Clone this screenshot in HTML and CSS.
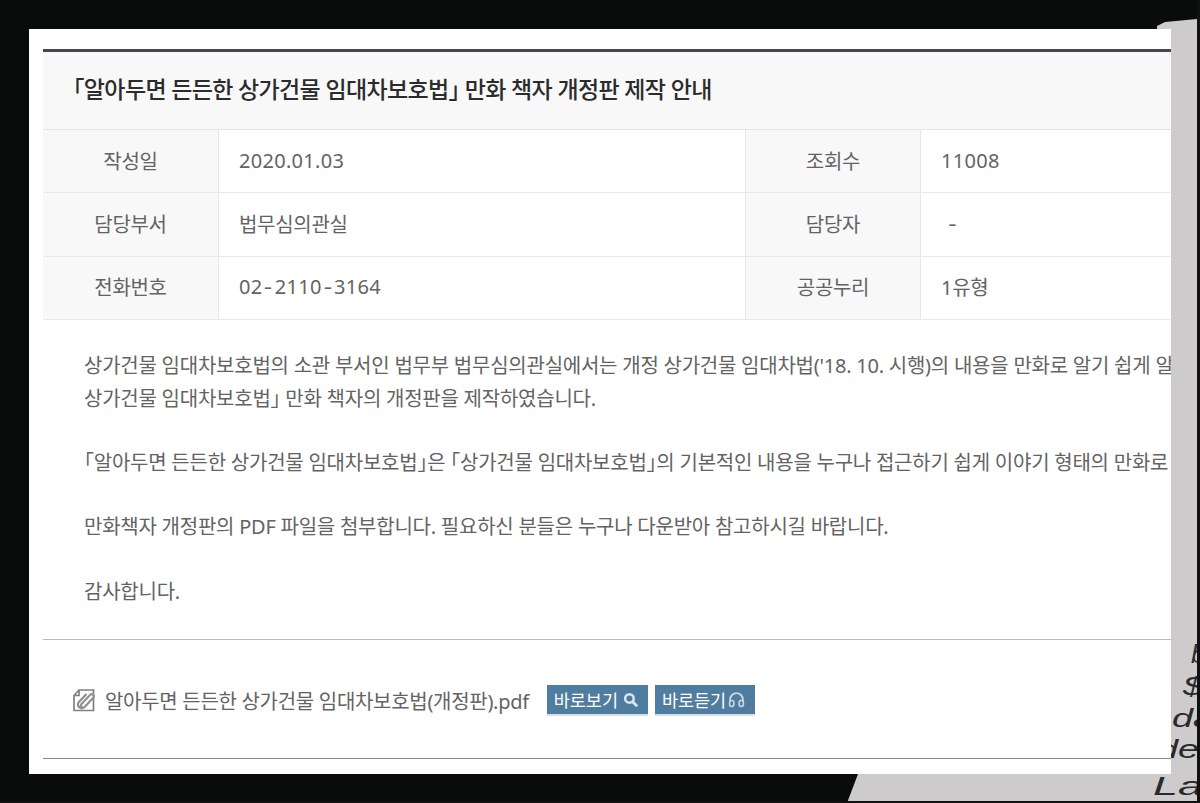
FILE: index.html
```html
<!DOCTYPE html>
<html lang="ko">
<head>
<meta charset="utf-8">
<title>상가건물 임대차보호법 만화 책자 개정판 제작 안내</title>
<link rel="stylesheet" href="styles.css">
</head>
<body>
<svg class="paper" width="1200" height="803" viewBox="0 0 1200 803" aria-hidden="true">
  <polygon points="1157,26 1165,22 1197,19 1197,803 847,803 858,774 1160,770" fill="#cdcbcc"/>
  <g class="paper-text">
    <text x="1191" y="663">b</text>
    <text x="1183" y="695" textLength="20" lengthAdjust="spacingAndGlyphs">$</text>
    <text x="1172" y="727" textLength="42" lengthAdjust="spacingAndGlyphs">da</text>
    <text x="1157" y="758" textLength="42" lengthAdjust="spacingAndGlyphs">de</text>
    <text x="1153" y="795" textLength="50" lengthAdjust="spacingAndGlyphs">La</text>
  </g>
  <rect class="paper-edge" x="1197" y="0" width="3" height="803"/>
  <rect class="paper-edge" x="0" y="801" width="1200" height="2"/>
</svg>
<main class="card">
  <article class="view">
    <h1 class="title"><span class="br">「</span>알아두면 든든한 상가건물 임대차보호법<span class="br">」</span> 만화 책자 개정판 제작 안내</h1>
    <div class="meta">
      <div class="label">작성일</div><div class="value num">2020.01.03</div>
      <div class="label">조회수</div><div class="value num">11008</div>
      <div class="label">담당부서</div><div class="value">법무심의관실</div>
      <div class="label">담당자</div><div class="value value-dash"><span class="hy">-</span></div>
      <div class="label">전화번호</div><div class="value num">02<span class="hy">-</span>2110<span class="hy">-</span>3164</div>
      <div class="label">공공누리</div><div class="value">1유형</div>
    </div>
    <div class="body">
      <p class="line">상가건물 임대차보호법의 소관 부서인 법무부 법무심의관실에서는 개정 상가건물 임대차법('18. 10. 시행)의 내용을 만화로 알기 쉽게 알</p>
      <p class="line">상가건물 임대차보호법<span class="br">」</span> 만화 책자의 개정판을 제작하였습니다.</p>
      <p class="line">&nbsp;</p>
      <p class="line"><span class="br">「</span>알아두면 든든한 상가건물 임대차보호법<span class="br">」</span>은 <span class="br">「</span>상가건물 임대차보호법<span class="br">」</span>의 기본적인 내용을 누구나 접근하기 쉽게 이야기 형태의 만화로</p>
      <p class="line">&nbsp;</p>
      <p class="line">만화책자 개정판의 PDF 파일을 첨부합니다. 필요하신 분들은 누구나 다운받아 참고하시길 바랍니다.</p>
      <p class="line">&nbsp;</p>
      <p class="line">감사합니다.</p>
    </div>
    <div class="files">
      <svg class="clip" width="24" height="24" viewBox="0 0 24 24" aria-hidden="true">
        <path d="M7 2 H21.500 V22.500 H2 V7.500 Z M7 2 V7.500 H2" fill="none" stroke="#808080" stroke-width="1.700"/>
        <path d="M18.500 6.500 L9.500 16 a2.200 2.200 0 0 0 3.200 3 L20 11 M18.500 6.500 a2.300 2.300 0 0 1 3.200 3 L12 19.500 a3.800 3.800 0 0 1 -5.500 -5 L14 6.500" fill="none" stroke="#8f8f8f" stroke-width="2.100" stroke-linecap="round"/>
      </svg>
      <span class="filename">알아두면 든든한 상가건물 임대차보호법(개정판).pdf</span>
      <a class="btn btn-view">바로보기
        <svg width="15" height="15" viewBox="0 0 14 14" aria-hidden="true"><circle cx="6" cy="6" r="4" fill="none" stroke="#dbe6ef" stroke-width="2.300"/><path d="M9 9 L12.500 12.500" stroke="#dbe6ef" stroke-width="2.600" stroke-linecap="round"/></svg>
      </a>
      <a class="btn btn-listen">바로듣기
        <svg width="17" height="17" viewBox="0 0 16 16" aria-hidden="true"><path d="M2 10 V8 a6 6 0 0 1 12 0 V10" fill="none" stroke="#c6d6e3" stroke-width="1.700"/><rect x="1.500" y="9" width="4" height="5.500" rx="1.800" fill="none" stroke="#c6d6e3" stroke-width="1.500"/><rect x="10.500" y="9" width="4" height="5.500" rx="1.800" fill="none" stroke="#c6d6e3" stroke-width="1.500"/></svg>
      </a>
    </div>
  </article>
</main>
</body>
</html>
```
FILE: styles.css
```css
html, body {
  margin: 0;
  padding: 0;
  width: 1200px;
  height: 803px;
  overflow: hidden;
  background: #0a0c0c;
}
body {
  font-family: "Noto Sans", "Noto Sans CJK KR", sans-serif;
  color: #636363;
  padding: 29px;
  box-sizing: border-box;
}
.paper {
  position: absolute;
  left: 0;
  top: 0;
}
.paper-text text {
  font-family: "Liberation Sans", sans-serif;
  font-style: italic;
  font-size: 26px;
  fill: #2a2a2a;
}
.paper-edge {
  fill: #111;
}
.card {
  position: relative;
  width: 1142px;
  height: 745px;
  background: #fff;
  padding: 20px 0 0 14px;
  box-sizing: border-box;
  overflow: hidden;
}
.view {
  width: 1128px;
}
.br {
  font-feature-settings: "halt";
}
.title {
  margin: 0;
  height: 81px;
  box-sizing: border-box;
  border-top: 3px solid #45464f;
  border-bottom: 1px solid #e4e4e4;
  background: #f8f8f8;
  padding: 0 0 5px 30px;
  display: flex;
  align-items: center;
  font-size: 23px;
  font-weight: 500;
  color: #2b2b2b;
  letter-spacing: -0.65px;
  white-space: pre;
}
.meta {
  display: grid;
  grid-template-columns: 176px 527px 175px 250px;
  grid-auto-rows: 63.300px;
}
.label, .value {
  display: flex;
  align-items: center;
  box-sizing: border-box;
  border-bottom: 1px solid #e8e8e8;
  padding-bottom: 2px;
  font-size: 20px;
  letter-spacing: -0.3px;
}
.label {
  justify-content: center;
  background: #f8f8f8;
  border-right: 1px solid #e8e8e8;
}
.value {
  padding-left: 20px;
}
.value:nth-child(2), .value:nth-child(6), .value:nth-child(10) {
  border-right: 1px solid #e8e8e8;
}
.num {
  letter-spacing: 0.3px;
}
.hy {
  display: inline-block;
  width: 12.300px;
  text-align: center;
  transform: scaleX(1.300);
}
.value-dash {
  padding-left: 25px;
}
.body {
  padding: 30.500px 0 30.500px 41px;
  border-bottom: 1px solid #bbb;
  overflow: hidden;
}
.line {
  margin: 0;
  font-size: 20px;
  line-height: 32.200px;
  white-space: nowrap;
  letter-spacing: -0.24px;
}
.files {
  display: flex;
  align-items: center;
  height: 119px;
  box-sizing: border-box;
  padding: 3px 0 0 29px;
  border-bottom: 1px solid #888;
}
.clip {
  flex: none;
  margin-right: 9px;
}
.filename {
  font-size: 20px;
  letter-spacing: -0.3px;
  margin-right: 18px;
  white-space: nowrap;
}
.btn {
  display: inline-flex;
  align-items: center;
  gap: 5px;
  height: 29px;
  margin-bottom: 2px;
  box-sizing: border-box;
  padding: 0 10px 0 7px;
  background: #4f7da0;
  box-shadow: 0 2px 0 #d5dfe7;
  color: #fff;
  font-size: 17.500px;
  white-space: nowrap;
  letter-spacing: -0.05px;
}
.btn-view {
  margin-right: 7px;
}
.btn-listen {
  gap: 2px;
}
```
